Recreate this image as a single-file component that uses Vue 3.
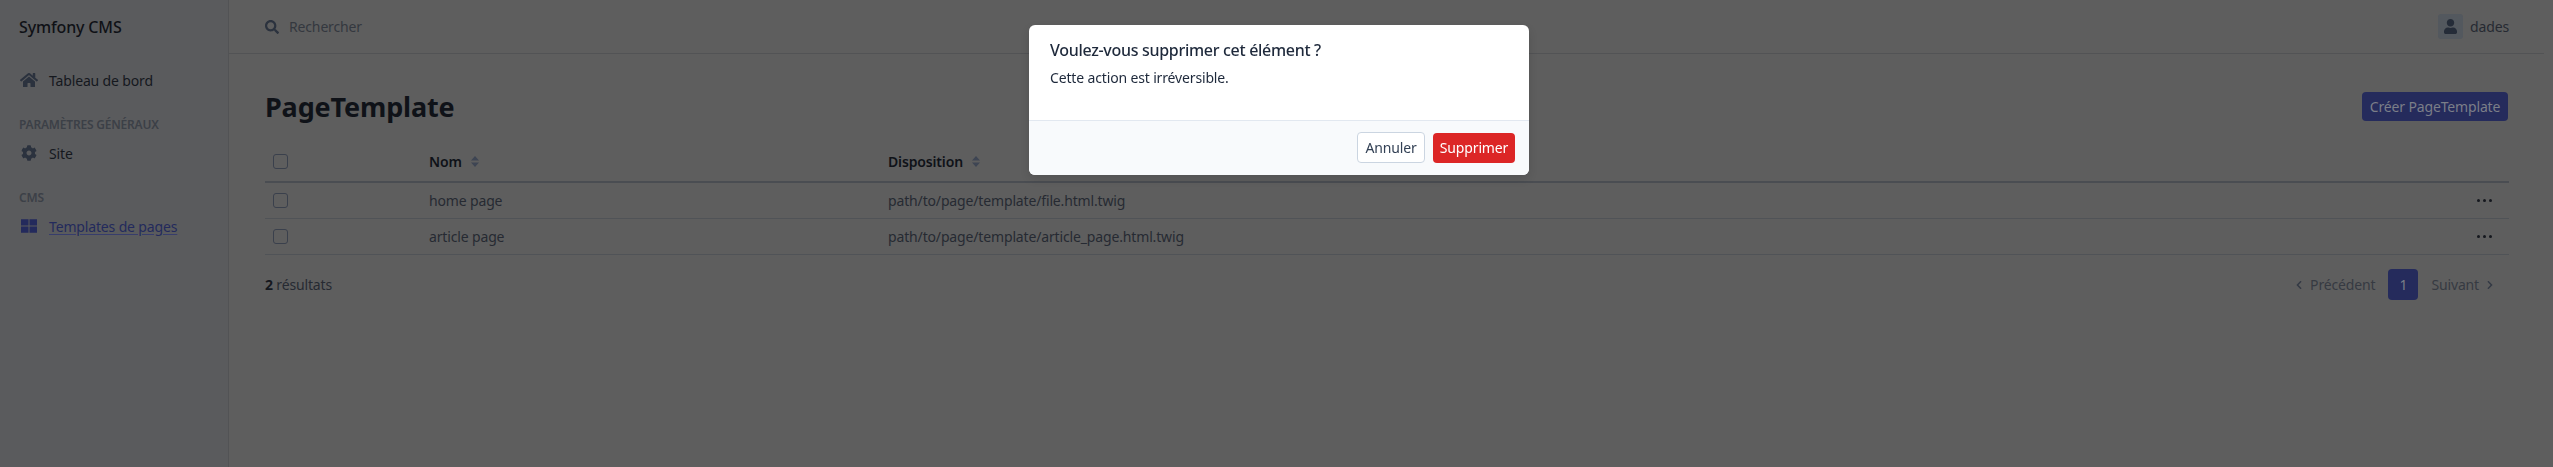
<script setup>
const rows = [
  { name: 'home page', path: 'path/to/page/template/file.html.twig' },
  { name: 'article page', path: 'path/to/page/template/article_page.html.twig' }
]
</script>

<template>
  <div class="page">
    <aside class="sidebar">
      <div class="brand">Symfony CMS</div>
      <nav class="nav">
        <a class="item first">
          <svg class="ico home" viewBox="0 0 576 512"><path d="M280.37 148.26L96 300.11V464a16 16 0 0 0 16 16l112.06-.29a16 16 0 0 0 15.92-16V368a16 16 0 0 1 16-16h64a16 16 0 0 1 16 16v95.64a16 16 0 0 0 16 16.05L464 480a16 16 0 0 0 16-16V300L295.67 148.26a12.19 12.19 0 0 0-15.3 0zM571.6 251.47L488 182.56V44.05a12 12 0 0 0-12-12h-56a12 12 0 0 0-12 12v72.61L318.47 43a48 48 0 0 0-61 0L4.34 251.47a12 12 0 0 0-1.6 16.9l25.5 31A12 12 0 0 0 45.15 301l235.22-193.74a12.19 12.19 0 0 1 15.3 0L530.9 301a12 12 0 0 0 16.9-1.6l25.5-31a12 12 0 0 0-1.7-16.93z"/></svg>
          <span>Tableau de bord</span>
        </a>
        <div class="section">PARAMÈTRES GÉNÉRAUX</div>
        <a class="item">
          <svg class="ico" viewBox="0 0 512 512"><path d="M487.4 315.7l-42.6-24.6c4.3-23.2 4.3-47 0-70.2l42.6-24.6c4.9-2.8 7.1-8.6 5.5-14-11.1-35.6-30-67.8-54.7-94.6-3.8-4.1-10-5.1-14.8-2.3L380.8 110c-17.9-15.4-38.5-27.3-60.8-35.1V25.8c0-5.6-3.9-10.5-9.4-11.7-36.7-8.2-74.3-7.8-109.2 0-5.5 1.2-9.4 6.1-9.4 11.7V75c-22.2 7.9-42.8 19.8-60.8 35.1L88.7 85.5c-4.9-2.8-11-1.9-14.8 2.3-24.7 26.7-43.6 58.9-54.7 94.6-1.7 5.4.6 11.2 5.5 14L67.3 221c-4.3 23.2-4.3 47 0 70.2l-42.6 24.6c-4.9 2.8-7.1 8.6-5.5 14 11.1 35.6 30 67.8 54.7 94.6 3.8 4.1 10 5.1 14.8 2.3l42.6-24.6c17.9 15.4 38.5 27.3 60.8 35.1v49.2c0 5.6 3.9 10.5 9.4 11.7 36.7 8.2 74.3 7.8 109.2 0 5.5-1.2 9.4-6.1 9.4-11.7v-49.2c22.2-7.9 42.8-19.8 60.8-35.1l42.6 24.6c4.9 2.8 11 1.9 14.8-2.3 24.7-26.7 43.6-58.9 54.7-94.6 1.5-5.5-.7-11.3-5.6-14.1zM256 336c-44.1 0-80-35.9-80-80s35.9-80 80-80 80 35.9 80 80-35.9 80-80 80z"/></svg>
          <span>Site</span>
        </a>
        <div class="section">CMS</div>
        <a class="item active">
          <svg class="ico" viewBox="0 0 512 512"><path d="M0 40h240v200H0zM272 40h240v200H272zM0 272h240v200H0zM272 272h240v200H272z"/></svg>
          <span class="active-label">Templates de pages</span>
        </a>
      </nav>
    </aside>

    <div class="main">
      <header class="topbar">
        <div class="search">
          <svg class="search-ico" viewBox="0 0 512 512"><path d="M505 442.7L405.3 343c-4.5-4.5-10.6-7-17-7H372c27.6-35.3 44-79.7 44-128C416 93.1 322.9 0 208 0S0 93.1 0 208s93.1 208 208 208c48.3 0 92.7-16.4 128-44v16.3c0 6.4 2.5 12.5 7 17l99.7 99.7c9.4 9.4 24.6 9.4 33.9 0l28.3-28.3c9.4-9.4 9.4-24.6.1-34zM208 336c-70.7 0-128-57.2-128-128 0-70.7 57.2-128 128-128 70.7 0 128 57.2 128 128 0 70.7-57.2 128-128 128z"/></svg>
          <span>Rechercher</span>
        </div>
        <div class="user">
          <span class="avatar">
            <svg viewBox="0 0 448 512"><path d="M224 256c70.7 0 128-57.3 128-128S294.7 0 224 0 96 57.3 96 128s57.3 128 128 128zm89.6 32h-16.7c-22.2 10.2-46.9 16-72.9 16s-50.6-5.8-72.9-16h-16.7C60.2 288 0 348.2 0 422.4V464c0 26.5 21.5 48 48 48h352c26.5 0 48-21.5 48-48v-41.6c0-74.2-60.2-134.4-134.4-134.4z"/></svg>
          </span>
          <span>dades</span>
        </div>
      </header>

      <main class="content">
        <div class="title-row">
          <h1>PageTemplate</h1>
          <button class="create">Créer PageTemplate</button>
        </div>

        <table class="table">
          <colgroup>
            <col class="c1" /><col class="c2" /><col /><col class="c4" />
          </colgroup>
          <thead>
            <tr>
              <th><span class="check"></span></th>
              <th>
                <span class="th-in">Nom
                  <svg class="sort" viewBox="0 0 8 11"><path d="M4 0l4 4.4H0zM4 11L0 6.6h8z"/></svg>
                </span>
              </th>
              <th>
                <span class="th-in">Disposition
                  <svg class="sort" viewBox="0 0 8 11"><path d="M4 0l4 4.4H0zM4 11L0 6.6h8z"/></svg>
                </span>
              </th>
              <th></th>
            </tr>
          </thead>
          <tbody>
            <tr v-for="row in rows" :key="row.name">
              <td><span class="check"></span></td>
              <td>{{ row.name }}</td>
              <td>{{ row.path }}</td>
              <td class="dots-cell"><span class="dots"><i></i><i></i><i></i></span></td>
            </tr>
          </tbody>
        </table>

        <div class="table-foot">
          <div class="count"><b>2</b> résultats</div>
          <div class="pager">
            <span class="pg">
              <svg class="chev" viewBox="0 0 320 512"><path d="M34.52 239.03L228.87 44.69c9.37-9.37 24.57-9.37 33.94 0l22.67 22.67c9.36 9.36 9.37 24.52.04 33.9L131.49 256l154.02 154.75c9.34 9.38 9.32 24.54-.04 33.9l-22.67 22.67c-9.37 9.37-24.57 9.37-33.94 0L34.52 272.97c-9.37-9.37-9.37-24.57 0-33.94z"/></svg>
              Précédent
            </span>
            <span class="current">1</span>
            <span class="pg">
              Suivant
              <svg class="chev" viewBox="0 0 320 512"><path d="M285.476 272.971L91.132 467.314c-9.373 9.373-24.569 9.373-33.941 0l-22.667-22.667c-9.357-9.357-9.375-24.522-.04-33.901L188.505 256 34.484 101.255c-9.335-9.379-9.317-24.544.04-33.901l22.667-22.667c9.373-9.373 24.569-9.373 33.941 0L285.475 239.03c9.373 9.372 9.373 24.568.001 33.941z"/></svg>
            </span>
          </div>
        </div>
      </main>
    </div>

    <div class="backdrop">
      <div class="modal">
        <div class="modal-body">
          <h2>Voulez-vous supprimer cet élément ?</h2>
          <p>Cette action est irréversible.</p>
        </div>
        <div class="modal-foot">
          <button class="btn cancel">Annuler</button>
          <button class="btn danger">Supprimer</button>
        </div>
      </div>
    </div>
  </div>
</template>

<style>
html, body { margin: 0; background: #5e5e5e; }
</style>

<style scoped>
.page {
  display: flex;
  min-height: 467px;
  padding-right: 9px;
  box-sizing: border-box;
  background: #5e5e5e;
  color: #22262e;
  font-family: "Noto Sans", "Open Sans", sans-serif;
  font-size: 14px;
  letter-spacing: -0.15px;
  overflow: hidden;
}
.sidebar {
  flex: none;
  box-sizing: border-box;
  background: #5a5b5d;
  border-right: 1px solid #525355;
  padding: 0 0 0 19px;
  width: 229px;
}
.brand {
  height: 53px;
  display: flex;
  align-items: center;
  font-size: 16px;
  font-weight: 500;
  color: #0f1116;
}
.nav { display: flex; flex-direction: column; }
.item {
  display: flex;
  align-items: center;
  height: 30px;
  color: #15181e;
}
.item.first { margin-top: 12px; }
.ico {
  width: 18px;
  height: 16px;
  margin: 0 11px 0 1px;
  fill: #2b323e;
  flex: none;
}
.section {
  font-size: 12px;
  font-weight: 600;
  letter-spacing: -0.2px;
  color: #3c4047;
  height: 14px;
  line-height: 14px;
  margin: 23px 0 6px;
}
.active .ico { fill: #232a5c; }
.active-label {
  color: #232a5c;
  text-decoration: underline;
  text-decoration-color: #373d6c;
  text-underline-offset: 2px;
}
.main { flex: 1; min-width: 0; display: flex; flex-direction: column; }
.topbar {
  height: 53px;
  border-bottom: 1px solid #525355;
  display: flex;
  align-items: center;
  justify-content: space-between;
  padding: 0 35px 0 36px;
}
.search { display: flex; align-items: center; color: #34383f; }
.search-ico { width: 14px; height: 14px; margin-right: 10px; fill: #2b323e; }
.user { display: flex; align-items: center; gap: 7px; color: #262a32; }
.avatar {
  width: 25px;
  height: 25px;
  border-radius: 3px;
  background: #53585e;
  display: flex;
  align-items: center;
  justify-content: center;
}
.avatar svg { width: 13px; height: 15px; fill: #252c38; }
.content { padding: 38px 35px 0 36px; }
.title-row {
  display: flex;
  align-items: center;
  justify-content: space-between;
  height: 29px;
}
h1 {
  margin: 0;
  font-size: 27px;
  font-weight: 700;
  letter-spacing: -0.15px;
  color: #0f1218;
}
.create {
  height: 29px;
  width: 146px;
  margin-right: 1px;
  border: 0;
  border-radius: 4px;
  background: #252b5c;
  color: #7b7e88;
  font: inherit;
  letter-spacing: inherit;
  padding: 0;
}
.table {
  width: 100%;
  margin-top: 21px;
  border-collapse: collapse;
  table-layout: fixed;
}
.c1 { width: 156px; }
.c2 { width: 459px; }
.c4 { width: 60px; }
th, td { padding: 0 8px; text-align: left; }
th {
  height: 39px;
  font-weight: 600;
  color: #0f1218;
  border-bottom: 2px solid #4a4d52;
}
td {
  height: 35px;
  color: #262a32;
  border-bottom: 1px solid #505357;
}
.th-in { display: inline-flex; align-items: center; gap: 9px; }
.sort { width: 8px; height: 11px; fill: #3e4553; }
.check {
  display: block;
  width: 13px;
  height: 13px;
  border: 1px solid #3a404c;
  border-radius: 3px;
}
.dots-cell { text-align: right; padding-right: 17px; }
.dots { display: flex; justify-content: flex-end; gap: 3px; }
.dots i { width: 3px; height: 3px; border-radius: 50%; background: #15181e; }
.table-foot {
  display: flex;
  align-items: center;
  justify-content: space-between;
  margin-top: 14px;
  height: 31px;
}
.count { color: #262a32; }
.count b { font-weight: 700; color: #15181e; }
.pager { display: flex; align-items: center; color: #363a42; padding-right: 16px; }
.pg { display: inline-flex; align-items: center; gap: 8px; }
.chev { width: 6px; height: 10px; fill: #343a45; }
.current {
  width: 30px;
  height: 31px;
  margin: 0 13px;
  border-radius: 4px;
  background: #252b5c;
  color: #7b7e88;
  display: flex;
  align-items: center;
  justify-content: center;
}
.backdrop {
  position: fixed;
  inset: 0;
  display: flex;
  justify-content: center;
  align-items: flex-start;
  padding-top: 25px;
  padding-left: 5px;
  box-sizing: border-box;
}
.modal {
  width: 500px;
  height: 150px;
  border-radius: 6px;
  background: #fff;
  overflow: hidden;
  display: flex;
  flex-direction: column;
  box-shadow: 0 4px 10px rgba(0, 0, 0, 0.12);
}
.modal-body { flex: 1; padding: 15px 21px 0; color: #1f2937; }
h2 { margin: 0; font-size: 16px; line-height: 20px; font-weight: 500; letter-spacing: -0.3px; color: #1e293b; }
p { margin: 8px 0 0; font-size: 14px; line-height: 20px; color: #1e293b; }
.modal-foot {
  height: 55px;
  box-sizing: border-box;
  border-top: 1px solid #e2e8f0;
  background: #f8fafc;
  display: flex;
  align-items: center;
  justify-content: flex-end;
  gap: 8px;
  padding: 0 14px 1px 0;
}
.btn {
  font: inherit;
  letter-spacing: inherit;
  padding: 0;
  border-radius: 4px;
  box-sizing: border-box;
}
.cancel { width: 68px; height: 31px; background: #fff; border: 1px solid #cbd5e1; color: #334155; }
.danger { width: 82px; height: 30px; background: #dc2626; border: 0; color: #fff; }
</style>
